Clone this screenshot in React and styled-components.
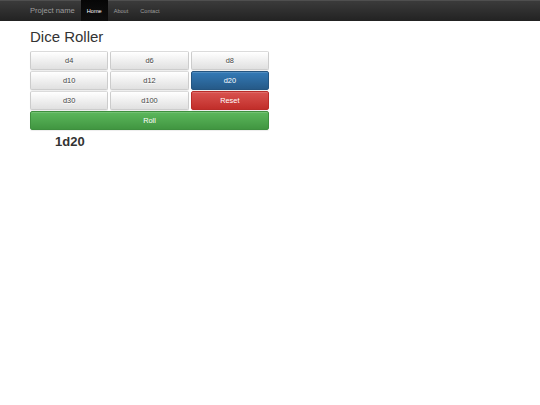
import React, { useState } from 'react';
import styled, { createGlobalStyle, css } from 'styled-components';

const DICE = ['d4', 'd6', 'd8', 'd10', 'd12', 'd20', 'd30', 'd100'];

const GlobalStyle = createGlobalStyle`
  html, body {
    margin: 0;
    padding: 0;
    background: #fff;
    font-family: "Liberation Sans", Arial, sans-serif;
    color: #333;
  }
`;

function App() {
  const [die, setDie] = useState('d20');
  const [count, setCount] = useState(1);

  function pick(value) {
    if (value === die) {
      setCount(count + 1);
    } else {
      setDie(value);
      setCount(1);
    }
  }

  return (
    <>
      <GlobalStyle />
      <Navbar>
        <Brand href="#">Project name</Brand>
        <Nav>
          <NavLink href="#" active>Home</NavLink>
          <NavLink href="#">About</NavLink>
          <NavLink href="#">Contact</NavLink>
        </Nav>
      </Navbar>
      <Container>
        <Title>Dice Roller</Title>
        <DiceGrid>
          {DICE.map(value => (
            <DieButton
              key={value}
              variant={value === die ? 'primary' : 'default'}
              onClick={() => pick(value)}
            >
              {value}
            </DieButton>
          ))}
          <DieButton
            variant="danger"
            onClick={() => {
              setDie('d20');
              setCount(1);
            }}
          >
            Reset
          </DieButton>
          <RollButton variant="success">Roll</RollButton>
        </DiceGrid>
        <Expression>
          {count}
          {die}
        </Expression>
      </Container>
    </>
  );
}

const Navbar = styled.div`
  display: flex;
  align-items: stretch;
  height: 21px;
  padding-left: 30px;
  background: linear-gradient(to bottom, #3c3c3c 0%, #222 100%);
  box-shadow: inset 0 1px 0 rgba(255, 255, 255, 0.1);
`;

const Brand = styled.a`
  display: flex;
  align-items: center;
  padding-right: 6px;
  font-size: 7.6px;
  color: #9d9d9d;
  text-decoration: none;
`;

const Nav = styled.nav`
  display: flex;
`;

const NavLink = styled.a`
  display: flex;
  align-items: center;
  padding: 0 6px;
  font-size: 5.6px;
  color: #9d9d9d;
  text-decoration: none;
  ${props =>
    props.active &&
    css`
      color: #fff;
      background: linear-gradient(to bottom, #080808 0%, #0f0f0f 100%);
      box-shadow: inset 0 2px 4px rgba(0, 0, 0, 0.25);
    `}
`;

const Container = styled.div`
  width: 239px;
  margin-left: 30px;
  padding-top: 8px;
`;

const Title = styled.h1`
  margin: 0 0 5px;
  font-size: 15px;
  font-weight: 400;
  line-height: 16.5px;
  color: #333;
`;

const VARIANTS = {
  default: css`
    color: #444;
    background: linear-gradient(to bottom, #fff 0%, #e0e0e0 100%);
    border-color: #dbdbdb #ccc #ccc;
    text-shadow: 0 1px 0 #fff;
  `,
  primary: css`
    color: #fff;
    background: linear-gradient(to bottom, #337ab7 0%, #265a88 100%);
    border-color: #245580;
  `,
  danger: css`
    color: #fff;
    background: linear-gradient(to bottom, #d9534f 0%, #c12e2a 100%);
    border-color: #b92c28;
  `,
  success: css`
    color: #fff;
    background: linear-gradient(to bottom, #5cb85c 0%, #419641 100%);
    border-color: #3e8f3e;
  `,
};

const DiceGrid = styled.div`
  display: grid;
  grid-template-columns: repeat(3, 1fr);
  grid-auto-rows: 19px;
  gap: 1px 2px;
`;

const DieButton = styled.button`
  box-sizing: border-box;
  margin: 0;
  padding: 0;
  border: 1px solid;
  border-radius: 2px;
  font-family: "Liberation Sans", Arial, sans-serif;
  font-size: 7.4px;
  cursor: pointer;
  box-shadow: inset 0 1px 0 rgba(255, 255, 255, 0.15), 0 1px 1px rgba(0, 0, 0, 0.075);
  ${props => VARIANTS[props.variant]}
`;

const RollButton = styled(DieButton)`
  grid-column: 1 / -1;
`;

const Expression = styled.div`
  margin-top: 4px;
  padding-left: 25px;
  font-size: 13px;
  font-weight: 700;
  line-height: 15px;
  color: #333;
`;

export default App;
